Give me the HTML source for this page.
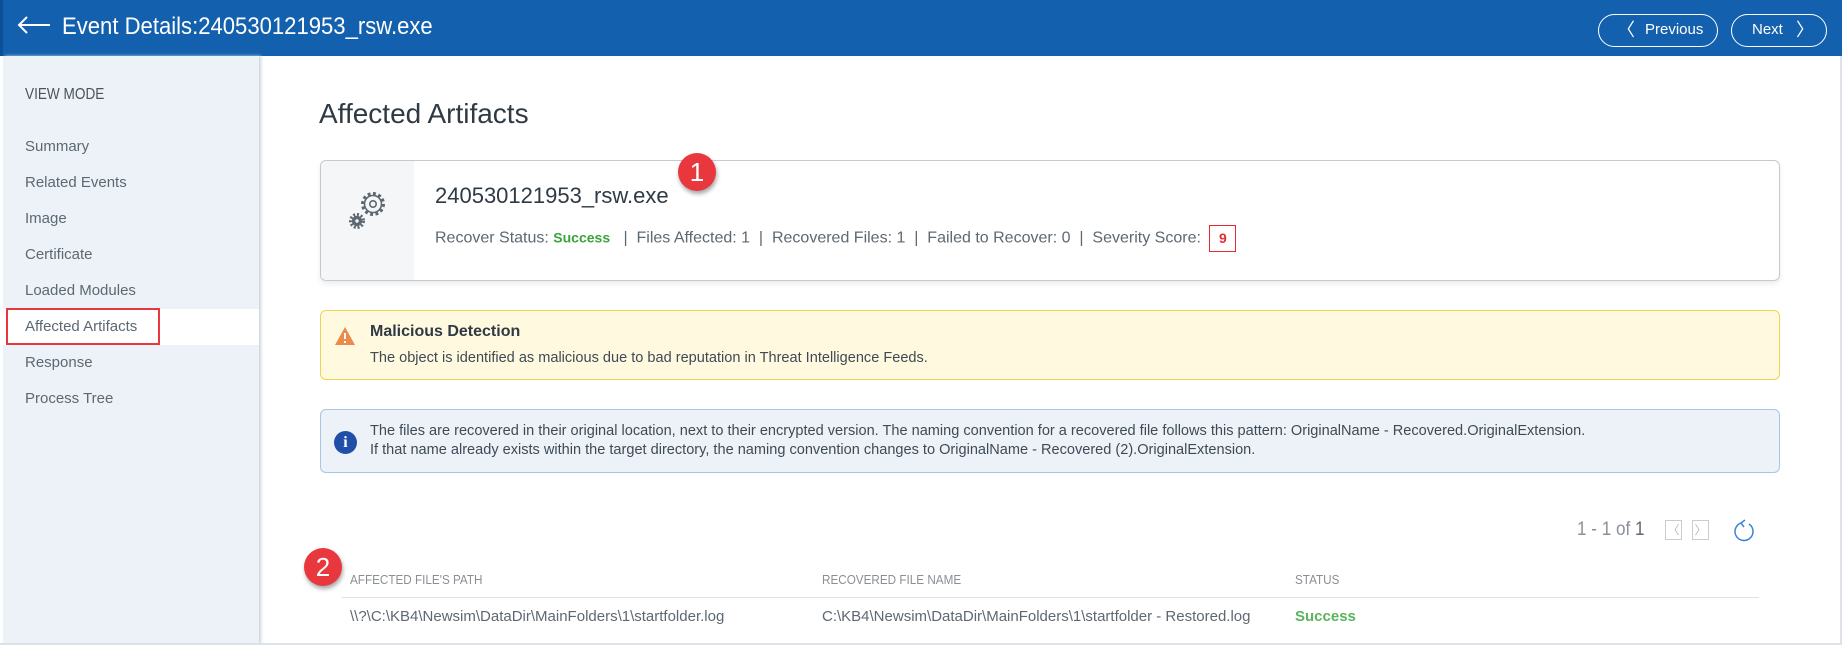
<!DOCTYPE html>
<html><head><meta charset="utf-8"><style>
*{box-sizing:border-box;margin:0;padding:0}
body{width:1842px;height:645px;overflow:hidden;background:#fff;font-family:"Liberation Sans Narrow","Liberation Sans",sans-serif;color:#5d6872;position:relative}
.abs{position:absolute;white-space:nowrap}
.hdr{position:absolute;left:0;top:0;width:1842px;height:56px;background:#1360ae;border-left:3px solid #0d4f96}
.btn{position:absolute;top:14px;height:33px;border:1.5px solid #fff;border-radius:17px;color:#fff;font-size:15px;line-height:30px}
.side{position:absolute;left:3px;top:56px;width:256px;height:589px;background:#edf2f8;box-shadow:2px 0 3px #ccd3dc}
.si{position:absolute;left:22px;font-size:15px;color:#5d6872;white-space:nowrap}
.card{position:absolute;left:320px;top:160px;width:1460px;height:121px;border:1px solid #c3cad2;border-radius:6px;box-shadow:0 3px 6px rgba(0,0,0,.08);overflow:hidden}
.badge{position:absolute;width:38px;height:38px;border-radius:50%;background:#e8383d;color:#fff;font-family:"Liberation Sans",sans-serif;font-size:26px;text-align:center;line-height:38px;box-shadow:1px 3px 4px rgba(0,0,0,.35)}
.th{position:absolute;top:572px;font-size:13px;color:#8a8f95;transform:scaleX(.9);transform-origin:left;white-space:nowrap}
.sq{transform:scaleX(.97);transform-origin:left}
</style></head><body>
<div class="hdr">
  <svg class="abs" style="left:13px;top:15px" width="36" height="20" viewBox="0 0 36 20"><path d="M34 10H3M11 2L3 10l8 8" stroke="#fff" stroke-width="2" fill="none"/></svg>
  <div class="abs" style="left:59px;top:13px;font-size:24px;color:#fff;transform:scaleX(.92);transform-origin:left">Event Details:240530121953_rsw.exe</div>
  <div class="btn" style="left:1595px;width:120px"><span style="position:absolute;left:18px;font-size:18px">&#x2329;</span><span style="position:absolute;left:46px">Previous</span></div>
  <div class="btn" style="left:1728px;width:96px"><span style="position:absolute;left:20px">Next</span><span style="position:absolute;left:64px;font-size:18px">&#x232A;</span></div>
</div>
<div class="side">
  <div class="si" style="top:30px;font-size:16px;color:#4a545e;transform:scaleX(.85);transform-origin:left">VIEW MODE</div>
  <div class="si" style="top:82px">Summary</div>
  <div class="si" style="top:118px">Related Events</div>
  <div class="si" style="top:154px">Image</div>
  <div class="si" style="top:190px">Certificate</div>
  <div class="si" style="top:226px">Loaded Modules</div>
  <div style="position:absolute;left:0;top:253px;width:256px;height:36px;background:#fff"></div>
  <div style="position:absolute;left:3px;top:252px;width:154px;height:37px;border:2px solid #e8383d"></div>
  <div class="si" style="top:262px">Affected Artifacts</div>
  <div class="si" style="top:298px">Response</div>
  <div class="si" style="top:334px">Process Tree</div>
</div>
<div class="abs" style="left:319px;top:98px;font-size:28px;color:#2f3a44">Affected Artifacts</div>
<div class="card">
  <div style="position:absolute;left:0;top:0;width:93px;height:121px;background:#f4f6f8"></div>
  <svg class="abs" style="left:24px;top:26px" width="46" height="46" viewBox="0 0 46 46">
    <circle cx="28" cy="17" r="10" fill="none" stroke="#5d6872" stroke-width="4" stroke-dasharray="2.8 2.4"/>
    <circle cx="28" cy="17" r="8.5" fill="#f4f6f8" stroke="#5d6872" stroke-width="1.6"/>
    <circle cx="28" cy="17" r="3.2" fill="none" stroke="#5d6872" stroke-width="1.6"/>
    <circle cx="12" cy="34" r="6.5" fill="none" stroke="#5d6872" stroke-width="3" stroke-dasharray="2 1.8"/>
    <circle cx="12" cy="34" r="5.2" fill="#5d6872"/>
    <circle cx="12" cy="34" r="1.7" fill="#f4f6f8"/>
  </svg>
  <div class="abs" style="left:114px;top:22px;font-size:22px;color:#2f3a44">240530121953_rsw.exe</div>
  <div class="abs" style="left:114px;top:64px;font-size:16px;color:#5d6872">Recover Status: <span style="color:#3aa43a;font-weight:bold;font-size:14px">Success</span> &nbsp; | &nbsp;Files Affected: 1 &nbsp;| &nbsp;Recovered Files: 1 &nbsp;| &nbsp;Failed to Recover: 0 &nbsp;| &nbsp;Severity Score: <span style="display:inline-block;vertical-align:middle;margin-left:4px;width:27px;height:27px;border:1.5px solid #e52b2b;color:#e52b2b;font-size:14px;font-weight:bold;text-align:center;line-height:24px">9</span></div>
</div>
<div class="badge" style="left:678px;top:153px">1</div>
<div style="position:absolute;left:320px;top:310px;width:1460px;height:70px;background:#fff9e0;border:1.5px solid #eed353;border-radius:6px"></div>
<svg class="abs" style="left:334px;top:326px" width="22" height="20" viewBox="0 0 22 20"><path d="M11 1L21 19H1Z" fill="#eb8a4a"/><path d="M11 7v6M11 15v2" stroke="#fff" stroke-width="2"/></svg>
<div class="abs" style="left:370px;top:323px;font-size:16px;font-weight:bold;color:#2f3a44">Malicious Detection</div>
<div class="abs sq" style="left:370px;top:349px;font-size:15px;color:#3f4a54">The object is identified as malicious due to bad reputation in Threat Intelligence Feeds.</div>
<div style="position:absolute;left:320px;top:409px;width:1460px;height:64px;background:#edf2f9;border:1.5px solid #a9c4e6;border-radius:6px"></div>
<div class="abs" style="left:334px;top:431px;width:23px;height:23px;border-radius:50%;background:#1f4fa8;color:#fff;font-family:'Liberation Serif',serif;font-weight:bold;font-size:16px;text-align:center;line-height:23px">i</div>
<div class="abs sq" style="left:370px;top:422px;font-size:15px;color:#3f4a54">The files are recovered in their original location, next to their encrypted version. The naming convention for a recovered file follows this pattern: OriginalName - Recovered.OriginalExtension.</div>
<div class="abs sq" style="left:370px;top:441px;font-size:15px;color:#3f4a54">If that name already exists within the target directory, the naming convention changes to OriginalName - Recovered (2).OriginalExtension.</div>
<div class="abs" style="left:1577px;top:519px;font-size:19px;color:#8a9099;transform:scaleX(.9);transform-origin:left">1 - 1 of <span style="color:#5d6872">1</span></div>
<div style="position:absolute;left:1665px;top:520px;width:17px;height:20px;border:1px solid #c8ccd0;color:#b5bac0;font-size:12px;text-align:center;line-height:18px">&#x2329;</div>
<div style="position:absolute;left:1692px;top:520px;width:17px;height:20px;border:1px solid #c8ccd0;color:#b5bac0;font-size:12px;text-align:center;line-height:18px">&#x232A;</div>
<svg class="abs" style="left:1733px;top:518px" width="22" height="26" viewBox="0 0 22 26"><path d="M8 5A9 9 0 1 0 16 6M8 5l4-3M8 5l3 4" stroke="#3a84d8" stroke-width="1.5" fill="none"/></svg>
<div class="badge" style="left:304px;top:548px">2</div>
<div class="th" style="left:350px">AFFECTED FILE'S PATH</div>
<div class="th" style="left:822px">RECOVERED FILE NAME</div>
<div class="th" style="left:1295px">STATUS</div>
<div style="position:absolute;left:342px;top:597px;width:1417px;height:1px;background:#dde0e4"></div>
<div class="abs" style="left:350px;top:608px;font-size:15px;color:#5d6872">\\?\C:\KB4\Newsim\DataDir\MainFolders\1\startfolder.log</div>
<div class="abs" style="left:822px;top:608px;font-size:15px;color:#5d6872">C:\KB4\Newsim\DataDir\MainFolders\1\startfolder - Restored.log</div>
<div class="abs" style="left:1295px;top:608px;font-size:15px;font-weight:bold;color:#5bb35b">Success</div>
<div style="position:absolute;left:0;top:643px;width:1842px;height:2px;background:#dde2e8"></div>
<div style="position:absolute;left:1840px;top:56px;width:2px;height:589px;background:#dde2e8"></div>
</body></html>
